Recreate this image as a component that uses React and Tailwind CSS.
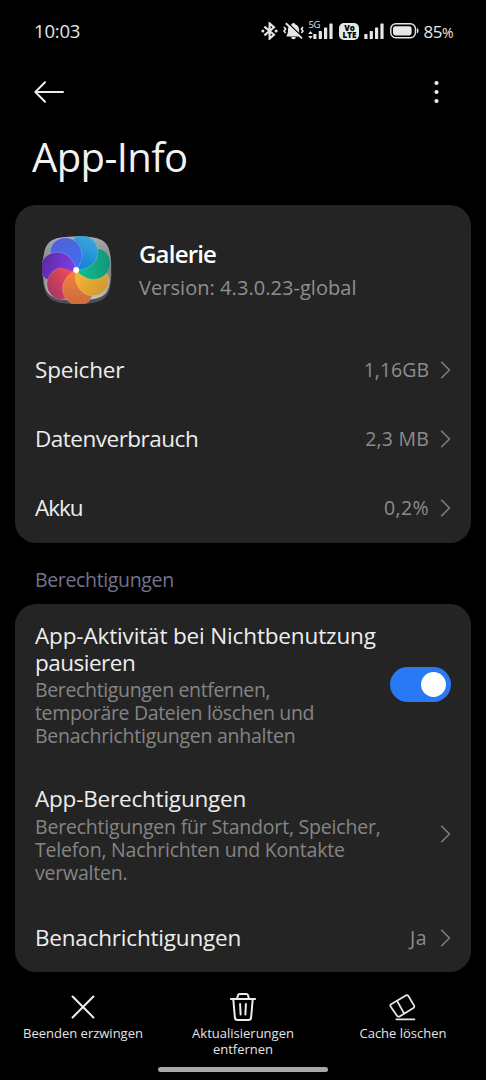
import React from 'react';

const Chevron = () => (
    <svg width="11" height="20" viewBox="0 0 11 20" fill="none" stroke="#7d7d7d" strokeWidth="1.6" className="shrink-0">
        <path d="M1.2 1.8 L9.4 10 L1.2 18.2" />
    </svg>
);

const PETAL = 'M0 0 C8 -4 13.5 -13 12 -21 C10.5 -29.5 4 -35 -4 -35 C-13 -35 -19 -28 -18 -20 C-16.5 -10 -7 -3 0 0 Z';

// clockwise, starting with the petal left of the top
const PETALS = [
    { id: 'blue', angle: -22, from: '#3f6df0', to: '#5461d8' },
    { id: 'sky', angle: 29, from: '#1583d8', to: '#3aa5da' },
    { id: 'green', angle: 81, from: '#12b88a', to: '#15957c' },
    { id: 'yellow', angle: 132, from: '#f5b431', to: '#cf9a32' },
    { id: 'orange', angle: 184, from: '#f0803c', to: '#cb6a3c' },
    { id: 'red', angle: 235, from: '#f04a55', to: '#a93763' },
    { id: 'purple', angle: 287, from: '#7b3be0', to: '#5f2ba4' },
];

const Petal = ({ petal, clip }) => (
    <g transform={`rotate(${petal.angle})`}>
        <path d={PETAL} fill={`url(#petal-${petal.id})`} stroke="#fff" strokeOpacity="0.25" strokeWidth="0.7" clipPath={clip ? 'url(#half)' : undefined} />
    </g>
);

const GalleryIcon = () => (
    <svg width="70" height="70" viewBox="-35 -35 70 70" className="shrink-0">
        <defs>
            <linearGradient id="plate" x1="0" y1="0" x2="0" y2="1">
                <stop offset="0" stopColor="#a9adb0" />
                <stop offset="0.5" stopColor="#7b7b7b" />
                <stop offset="1" stopColor="#c4c4c4" />
            </linearGradient>
            {PETALS.map((p) => (
                <linearGradient key={p.id} id={`petal-${p.id}`} gradientUnits="userSpaceOnUse" x1="0" y1="-6" x2="0" y2="-34">
                    <stop offset="0" stopColor={p.from} />
                    <stop offset="1" stopColor={p.to} />
                </linearGradient>
            ))}
            <clipPath id="half"><rect x="-2" y="-40" width="40" height="42" /></clipPath>
            <clipPath id="tile"><path d="M0 -34 C28 -34 35 -29 35 -2 C35 28 30 34 0 34 C-30 34 -35 28 -35 -2 C-35 -29 -28 -34 0 -34 Z" /></clipPath>
        </defs>
        <path d="M0 -33 C28 -33 34.5 -28 34.5 0 C34.5 28 29 34 0 34 C-29 34 -34.5 28 -34.5 0 C-34.5 -28 -28 -33 0 -33 Z" fill="#4b4d50" />
        <path d="M0 -33.5 C28 -33.5 34 -29 34 -2 C34 26 28 30 0 30 C-28 30 -34 26 -34 -2 C-34 -29 -28 -33.5 0 -33.5 Z" fill="url(#plate)" />
        <g clipPath="url(#tile)">
            <g transform="translate(-0.8 0)">
                {[...PETALS].reverse().map((p) => <Petal key={p.id} petal={p} />)}
                <Petal petal={PETALS[6]} clip />
                <circle r="3" fill="#fff" />
            </g>
        </g>
    </svg>
);

const Bars = () => (
    <svg width="20" height="16" viewBox="0 0 20 16" fill="#e6e6e6">
        <rect x="0.3" y="11" width="3.2" height="5" rx="0.6" />
        <rect x="5.7" y="8" width="3.2" height="8" rx="0.6" />
        <rect x="11" y="4.5" width="3.2" height="11.5" rx="0.6" />
        <rect x="16.4" y="0.5" width="3.2" height="15.5" rx="0.6" />
    </svg>
);

const StatusBar = () => (
    <div className="flex h-[62px] items-center justify-between pl-[34px] pr-[33px] text-[#e6e6e6]">
        <span className="text-[18.5px] leading-none tracking-[-0.2px]">10:03</span>
        <div className="flex items-center">
            <svg width="17" height="18" viewBox="0 0 17 18" fill="none" stroke="#e6e6e6" strokeWidth="2.1">
                <path d="M3.4 4.6 L13 12.8 L8.6 16.6 V1.4 L13 5.2 L3.4 13.4" />
                <circle cx="1.9" cy="9" r="1.5" fill="#e6e6e6" stroke="none" />
                <circle cx="15.1" cy="9" r="1.5" fill="#e6e6e6" stroke="none" />
            </svg>
            <svg width="21" height="18" viewBox="0 0 21 18" className="ml-[5px]">
                <path d="M10.5 1 C12 1 12.4 2.2 12.4 2.6 C15 3.4 16 5.4 16 8 C16 11 16.6 12.2 17.4 13.4 V14.4 H3.6 V13.4 C4.4 12.2 5 11 5 8 C5 5.4 6 3.4 8.6 2.6 C8.6 2.2 9 1 10.5 1 Z M8.2 15 H12.8 A2.3 2.3 0 0 1 8.2 15 Z" fill="#e6e6e6" />
                <path d="M4.2 0.6 L20.2 15.4" stroke="#000" strokeWidth="1.4" />
                <path d="M2.8 1.2 L19 16.4" stroke="#e6e6e6" strokeWidth="1.9" />
                <path d="M1 5 L2.6 7 L1 9 L2.6 11 M20 5 L18.4 7 L20 9 L18.4 11" fill="none" stroke="#e6e6e6" strokeWidth="1.6" />
            </svg>
            <div className="relative ml-[4px] flex items-end">
                <span className="absolute -top-[3.5px] left-0 text-[9.5px] font-medium leading-none tracking-[-0.4px]">5G</span>
                <svg width="5" height="8" viewBox="0 0 5 8" fill="#e6e6e6">
                    <path d="M2.5 0 L4.8 3 H0.2 Z M2.5 8 L4.8 5 H0.2 Z" />
                </svg>
                <Bars />
            </div>
            <div className="ml-[6px] flex h-[17px] w-5 flex-col items-center justify-center rounded-[5px] bg-[#e6e6e6] text-[8px] font-extrabold leading-[7.5px] text-black">
                <span>Vo</span>
                <span>LTE</span>
            </div>
            <div className="ml-[5px]"><Bars /></div>
            <svg width="29" height="16" viewBox="0 0 29 16" className="ml-[6px]">
                <rect x="0.8" y="0.8" width="24.6" height="14" rx="5" fill="none" stroke="#e6e6e6" strokeWidth="1.4" />
                <rect x="3" y="3.2" width="18.6" height="9.2" rx="2.4" fill="#e6e6e6" />
                <path d="M26.8 5 Q28.6 5.6 28.6 7.8 Q28.6 10 26.8 10.6 Z" fill="#e6e6e6" />
            </svg>
            <span className="ml-[4px] text-[17px] leading-none tracking-[-0.5px]">85<span className="text-[14px]">%</span></span>
        </div>
    </div>
);

const InfoRow = ({ label, value, labelClass = 'tracking-[-0.2px]', valueClass = '' }) => (
    <div className="flex h-[69px] items-center justify-between">
        <span className={`text-[22.5px] text-[#ededed] ${labelClass}`}>{label}</span>
        <div className="flex items-center gap-[11px]">
            <span className={`text-[19.5px] text-[#8c8c8c] ${valueClass}`}>{value}</span>
            <Chevron />
        </div>
    </div>
);

const Action = ({ icon, children }) => (
    <button className="flex w-40 flex-col items-center">
        <span className="flex h-[30px] items-center justify-center">{icon}</span>
        <span className="mt-[3px] text-[13px] leading-4 text-[#e4e4e4]">{children}</span>
    </button>
);

const App = () => {
    return (
        <div className="flex h-[1080px] w-[486px] flex-col overflow-hidden bg-black font-['Open_Sans',sans-serif]">
            <StatusBar />
            <div className="flex h-[60px] items-center justify-between pl-[34px] pr-[47px]">
                <svg width="30" height="22" viewBox="0 0 30 22" fill="none" stroke="#ececec" strokeWidth="2" strokeLinecap="round">
                    <path d="M29 11 H1.5 M11 1.3 L1.3 11 L11 20.7" />
                </svg>
                <svg width="5" height="24" viewBox="0 0 5 24" fill="#ececec">
                    <circle cx="2.5" cy="3" r="2.1" />
                    <circle cx="2.5" cy="12" r="2.1" />
                    <circle cx="2.5" cy="21" r="2.1" />
                </svg>
            </div>
            <h1 className="h-[82.5px] pl-8 pt-[8px] text-[40px] leading-[54px] tracking-[-0.6px] text-[#f2f2f2]"><span>App-Info</span></h1>

            <section className="mx-[15px] h-[338.5px] rounded-[21px] bg-[#242424] pl-5 pr-5">
                <div className="flex h-[131px] items-center pl-[7px]">
                    <GalleryIcon />
                    <div className="ml-[27px]">
                        <p className="text-[24px] font-semibold leading-[34px] tracking-[-0.8px] text-white"><span>Galerie</span></p>
                        <p className="text-[20px] leading-[33px] tracking-[0.05px] text-[#8f8f8f]"><span>Version: 4.3.0.23-global</span></p>
                    </div>
                </div>
                <InfoRow label="Speicher" value="1,16GB" />
                <InfoRow label="Datenverbrauch" value="2,3 MB" labelClass="tracking-[-0.5px]" valueClass="tracking-[0.2px]" />
                <InfoRow label="Akku" value="0,2%" labelClass="tracking-[-1px]" valueClass="tracking-[0.4px]" />
            </section>

            <h2 className="h-[60.5px] pl-[35px] pt-[22px] text-[19.5px] font-medium leading-[30px] tracking-[-0.35px] text-[#73738e]"><span>Berechtigungen</span></h2>

            <section className="mx-[15px] h-[368.5px] rounded-[21px] bg-[#242424] pl-5 pr-5">
                <div className="flex h-[161.5px] items-center justify-between">
                    <div className="whitespace-nowrap">
                        <p className="mb-[2px] text-[22.5px] leading-[27px] tracking-[-0.15px] text-[#ededed]">App-Aktivität bei Nichtbenutzung<br /><span className="tracking-[-0.5px]">pausieren</span></p>
                        <p className="text-[19.5px] leading-[23px] tracking-[-0.35px] text-[#858585]">Berechtigungen entfernen,<br />temporäre Dateien löschen und<br /><span className="tracking-[-0.25px]">Benachrichtigungen anhalten</span></p>
                    </div>
                    <button className="-ml-3 flex h-[35px] w-[61px] shrink-0 items-center justify-end rounded-full bg-[#2979f5] pr-[5px]">
                        <span className="size-[25px] rounded-full bg-white" />
                    </button>
                </div>
                <div className="flex h-[138px] items-center justify-between">
                    <div className="whitespace-nowrap">
                        <p className="mb-[3px] text-[22.5px] leading-[27px] tracking-[-0.2px] text-[#ededed]">App-Berechtigungen</p>
                        <p className="text-[19.5px] leading-[23px] tracking-[-0.2px] text-[#858585]">Berechtigungen für Standort, Speicher,<br />Telefon, Nachrichten und Kontakte<br />verwalten.</p>
                    </div>
                    <Chevron />
                </div>
                <InfoRow label="Benachrichtigungen" value="Ja" valueClass="pr-[2px] tracking-[0.5px]" />
            </section>

            <nav className="flex justify-center pt-[20px]">
                <Action
                    icon={
                        <svg width="24" height="24" viewBox="0 0 24 24" fill="none" stroke="#ececec" strokeWidth="2.1" strokeLinecap="round">
                            <path d="M1.6 1.6 L22.4 22.4 M22.4 1.6 L1.6 22.4" />
                        </svg>
                    }
                >
                    Beenden erzwingen
                </Action>
                <Action
                    icon={
                        <svg width="28" height="30" viewBox="0 0 28 30" fill="none" stroke="#ececec" strokeWidth="2" strokeLinecap="round" strokeLinejoin="round">
                            <path d="M1.9 7 H26.1 M8.1 6.6 L9.1 3 Q9.4 2 10.5 2 H17.5 Q18.6 2 18.9 3 L19.9 6.6" />
                            <path d="M4.3 7.4 L5.9 25.6 Q6.1 28 8.5 28 H19.5 Q21.9 28 22.1 25.6 L23.7 7.4 M11.1 12 L11.6 22.4 M16.9 12 L16.4 22.4" />
                        </svg>
                    }
                >
                    Aktualisierungen<br />entfernen
                </Action>
                <Action
                    icon={
                        <svg width="27" height="28" viewBox="0 0 27 28" fill="none" stroke="#e4e4e4" strokeWidth="1.8" strokeLinecap="round" strokeLinejoin="round" className="-ml-[2px]">
                            <path d="M2.1 11.2 L16.8 2.4 Q18.4 1.5 19.4 3 L25 12.4 Q25.8 14 24.4 15 L10.6 23.4 Q9 24.2 8 22.8 L1.6 13.4 Q0.8 12 2.1 11.2 Z M8 7.8 L15 20.4 M7.4 26.4 H25.4" />
                        </svg>
                    }
                >
                    Cache löschen
                </Action>
            </nav>
            <div className="mx-auto mb-[8px] mt-auto h-[5px] w-[170px] rounded-full bg-[#a8a8a8]" />
        </div>
    );
};

export default App;
